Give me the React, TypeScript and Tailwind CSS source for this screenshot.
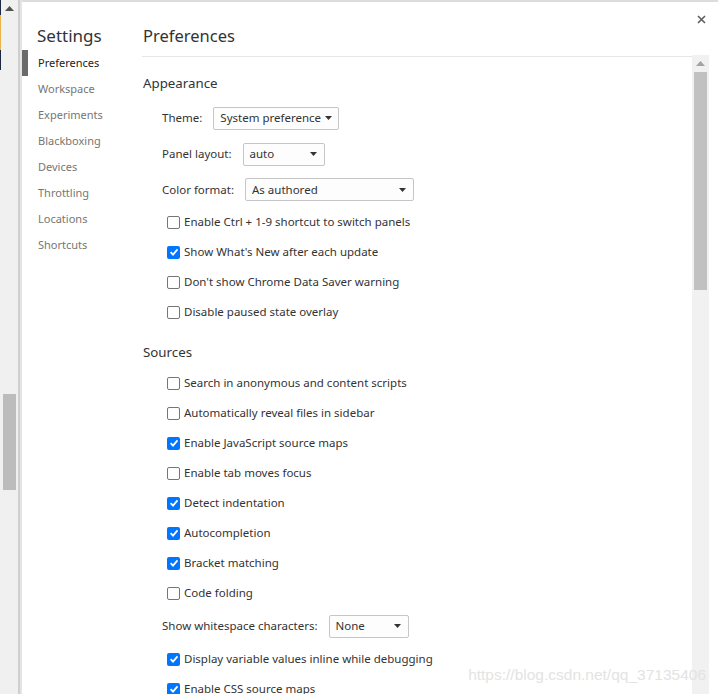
import React from 'react';

type Item = { label: string; checked?: boolean };

const sidebarItems = [
  'Preferences',
  'Workspace',
  'Experiments',
  'Blackboxing',
  'Devices',
  'Throttling',
  'Locations',
  'Shortcuts',
];

const appearanceChecks: Item[] = [
  { label: 'Enable Ctrl + 1-9 shortcut to switch panels' },
  { label: "Show What's New after each update", checked: true },
  { label: "Don't show Chrome Data Saver warning" },
  { label: 'Disable paused state overlay' },
];

const sourcesChecks: Item[] = [
  { label: 'Search in anonymous and content scripts' },
  { label: 'Automatically reveal files in sidebar' },
  { label: 'Enable JavaScript source maps', checked: true },
  { label: 'Enable tab moves focus' },
  { label: 'Detect indentation', checked: true },
  { label: 'Autocompletion', checked: true },
  { label: 'Bracket matching', checked: true },
  { label: 'Code folding' },
];

const moreChecks: Item[] = [
  { label: 'Display variable values inline while debugging', checked: true },
  { label: 'Enable CSS source maps', checked: true },
];

const Checkbox = ({ checked }: { checked?: boolean }) =>
  checked ? (
    <span className="w-[13px] h-[13px] rounded-[2px] bg-[#0075ff] flex items-center justify-center shrink-0">
      <svg width="10" height="10" viewBox="0 0 10 10">
        <path d="M1.6 5.2 L4 7.6 L8.5 2.4" fill="none" stroke="#fff" strokeWidth="1.8" />
      </svg>
    </span>
  ) : (
    <span className="w-[13px] h-[13px] rounded-[2px] border border-[#767676] bg-white shrink-0" />
  );

const CheckRow = ({ item }: { item: Item }) => (
  <div className="h-[30px] flex items-center pl-[24px] gap-[4px] whitespace-nowrap">
    <Checkbox checked={item.checked} />
    <span>{item.label}</span>
  </div>
);

const Select = ({ value, width }: { value: string; width: string }) => (
  <div
    className={`${width} h-[23px] border border-[#c6c6c6] rounded-[2px] bg-[#fdfdfd] flex items-center justify-between pl-[6px] pr-[7px] whitespace-nowrap`}
  >
    <span>{value}</span>
    <svg width="7" height="4" viewBox="0 0 7 4" className="shrink-0 ml-[4px]">
      <path d="M0 0 H7 L3.5 4 Z" fill="#333" />
    </svg>
  </div>
);

const SelectRow = ({
  label,
  value,
  width,
  height = 'h-[36px]',
}: {
  label: string;
  value: string;
  width: string;
  height?: string;
}) => (
  <div className={`${height} flex items-center pl-[19px] gap-[11px] whitespace-nowrap`}>
    <span>{label}</span>
    <Select value={value} width={width} />
  </div>
);

export default function App() {
  return (
    <div
      className="w-[718px] h-[694px] flex overflow-hidden bg-white text-[11.5px] text-[#333]"
      style={{ fontFamily: '"Segoe UI", "Noto Sans", sans-serif' }}
    >
      {/* background page peeking out on the left */}
      <div className="w-[22px] h-full flex shrink-0">
        <div className="w-[1px] h-full flex flex-col">
          <div className="h-[15px] bg-[#1c2744]" />
          <div className="h-[35px] bg-[#e8b24c]" />
          <div className="h-[20px] bg-[#1c2744]" />
          <div className="flex-1 bg-[#f0f0f0]" />
        </div>
        <div className="w-[17px] h-full bg-[#f0f0f0] flex flex-col items-center">
          <svg width="9" height="5" viewBox="0 0 9 5" className="mt-[6px]">
            <path d="M0 5 L4.5 0 L9 5 Z" fill="#505050" />
          </svg>
          <div className="w-[13px] h-[96px] bg-[#bcbcbc] mt-[383px]" />
        </div>
        <div className="w-[2px] h-full bg-[#cfcfcf]" />
        <div className="w-[2px] h-full bg-[#e4e4e4]" />
      </div>

      {/* settings dialog */}
      <div className="flex-1 h-full border-t-2 border-[#dcdcdc] flex relative">
        <button className="absolute right-[11px] top-[11px] w-[12px] h-[12px] flex items-center justify-center">
          <svg width="9" height="9" viewBox="0 0 9 9">
            <path d="M1 1 L8 8 M8 1 L1 8" stroke="#5f5f5f" strokeWidth="1.6" />
          </svg>
        </button>

        <div className="w-[120px] shrink-0 flex flex-col text-[11px]">
          <div className="h-[48px] flex items-end pb-[2px] pl-[15px] text-[17px] text-[#333]">Settings</div>
          {sidebarItems.map((s, i) => (
            <div
              key={s}
              className={`h-[26px] flex items-center pl-[16px] relative ${i === 0 ? 'text-[#222]' : 'text-[#767676]'}`}
            >
              {i === 0 && <span className="absolute left-0 top-0 w-[6px] h-[26px] bg-[#6a6a6a]" />}
              {s}
            </div>
          ))}
        </div>

        <div className="flex-1 flex min-w-0 mr-[9px]">
          <div className="flex-1 flex flex-col min-w-0">
            <div className="h-[55px] shrink-0 border-b border-[#e6e6e6] flex items-end pb-[7px] pl-[1px] text-[16.5px] text-[#333]">
              Preferences
            </div>
            <div className="flex-1 overflow-hidden pl-[1px]">
              <div className="pt-[14px] h-[40px] flex items-end">
                <div className="h-[26px] flex items-center text-[13.3px] text-[#333]">Appearance</div>
              </div>
              <div className="h-[3px]" />
              <SelectRow label="Theme:" value="System preference" width="w-[126px]" />
              <SelectRow label="Panel layout:" value="auto" width="w-[82px]" />
              <SelectRow label="Color format:" value="As authored" width="w-[169px]" height="h-[35px]" />
              {appearanceChecks.map((c) => (
                <CheckRow key={c.label} item={c} />
              ))}
              <div className="mt-[13px] h-[26px] flex items-center text-[13.3px] text-[#333]">Sources</div>
              <div className="h-[2px]" />
              {sourcesChecks.map((c) => (
                <CheckRow key={c.label} item={c} />
              ))}
              <SelectRow label="Show whitespace characters:" value="None" width="w-[80px]" />
              {moreChecks.map((c) => (
                <CheckRow key={c.label} item={c} />
              ))}
            </div>
          </div>

          <div className="w-[17px] shrink-0 flex flex-col">
            <div className="h-[53px]" />
            <div className="flex-1 bg-[#f1f1f1] flex flex-col items-center">
              <svg width="9" height="5" viewBox="0 0 9 5" className="mt-[6px]">
                <path d="M0 5 L4.5 0 L9 5 Z" fill="#a3a3a3" />
              </svg>
              <div className="w-[13px] h-[218px] bg-[#c1c1c1] mt-[6px]" />
            </div>
          </div>
        </div>

        <div
          className="absolute right-[12px] bottom-[8px] text-[15.5px] text-[#e3e3e3] pointer-events-none whitespace-nowrap"
          style={{ fontFamily: '"Liberation Sans", sans-serif' }}
        >
          https://blog.csdn.net/qq_37135406
        </div>
      </div>
    </div>
  );
}
